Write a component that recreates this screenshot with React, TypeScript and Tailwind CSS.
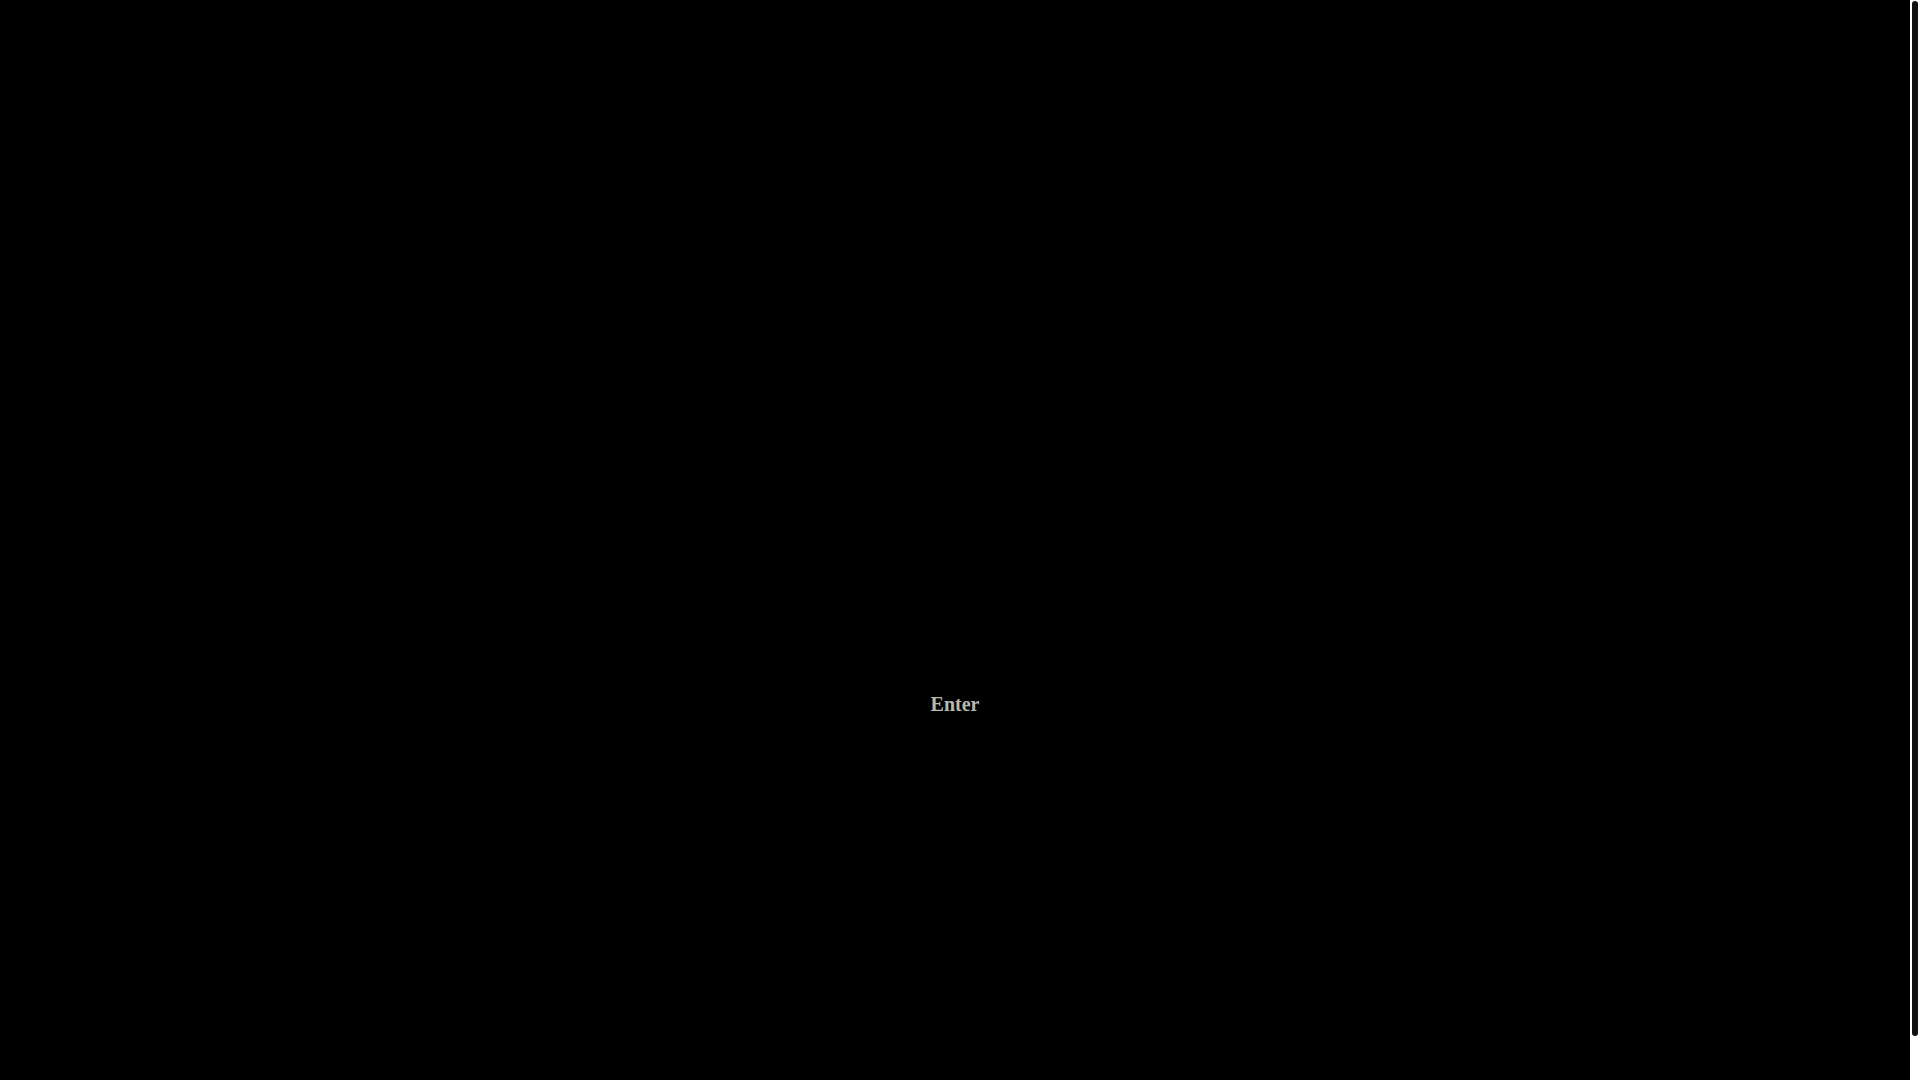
export default function App() {
  return (
    <div className="flex h-screen w-full overflow-hidden bg-black">
      <main className="flex-1 pt-[693px] text-center">
        <span
          className="text-[20px] font-bold leading-[23px] text-[#b5bab0]"
          style={{ fontFamily: '"Liberation Serif", "Times New Roman", serif' }}
        >
          Enter
        </span>
      </main>
      <div className="flex w-[10px] shrink-0 flex-col bg-white px-[2px] pt-[1px]">
        <div className="h-[1035px] w-full rounded-[3px] bg-[#111111]" />
      </div>
    </div>
  );
}
